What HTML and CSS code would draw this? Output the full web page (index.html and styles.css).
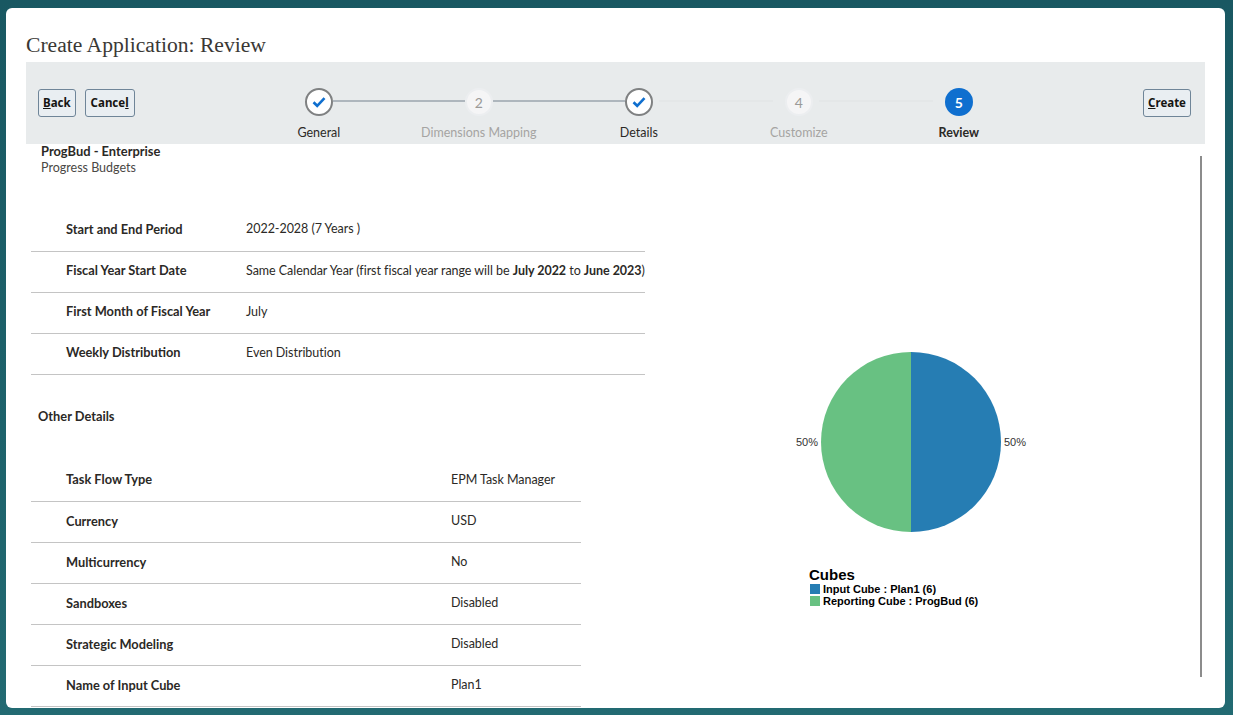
FILE: index.html
```html
<!DOCTYPE html>
<html lang="en">
<head>
    <meta charset="UTF-8">
    <title>Create Application: Review</title>
    <link rel="stylesheet" href="styles.css">
</head>
<body>
    <div class="dialog">
        <h1 class="dialog-title">Create Application: Review</h1>

        <div class="train-bar">
            <div class="train-actions">
                <button class="btn"><u>B</u>ack</button>
                <button class="btn btn-wide">Cance<u>l</u></button>
            </div>
            <ol class="train">
                <li class="step done line-dark">
                    <span class="step-icon">
                        <svg width="14" height="12" viewBox="0 0 14 12"><path d="M1.5 6.2 5.2 9.8 12.5 2.2" fill="none" stroke="#0f6fcf" stroke-width="2.6"/></svg>
                    </span>
                    <span class="step-label">General</span>
                </li>
                <li class="step todo line-dark">
                    <span class="step-icon">2</span>
                    <span class="step-label">Dimensions Mapping</span>
                </li>
                <li class="step done">
                    <span class="step-icon">
                        <svg width="14" height="12" viewBox="0 0 14 12"><path d="M1.5 6.2 5.2 9.8 12.5 2.2" fill="none" stroke="#0f6fcf" stroke-width="2.6"/></svg>
                    </span>
                    <span class="step-label">Details</span>
                </li>
                <li class="step todo">
                    <span class="step-icon">4</span>
                    <span class="step-label">Customize</span>
                </li>
                <li class="step current">
                    <span class="step-icon">5</span>
                    <span class="step-label">Review</span>
                </li>
            </ol>
            <div class="train-actions">
                <button class="btn"><u>C</u>reate</button>
            </div>
        </div>

        <div class="review">
            <div class="summary">
                <div class="app-name">ProgBud - Enterprise</div>
                <div class="app-desc">Progress Budgets</div>

                <table class="details details-main">
                    <tr><th>Start and End Period</th><td>2022-2028 (7 Years )</td></tr>
                    <tr><th>Fiscal Year Start Date</th><td>Same Calendar Year (first fiscal year range will be <b>July 2022</b> to <b>June 2023</b>)</td></tr>
                    <tr><th>First Month of Fiscal Year</th><td>July</td></tr>
                    <tr><th>Weekly Distribution</th><td>Even Distribution</td></tr>
                </table>

                <h2 class="section-title">Other Details</h2>

                <table class="details details-other">
                    <tr><th>Task Flow Type</th><td>EPM Task Manager</td></tr>
                    <tr><th>Currency</th><td>USD</td></tr>
                    <tr><th>Multicurrency</th><td>No</td></tr>
                    <tr><th>Sandboxes</th><td>Disabled</td></tr>
                    <tr><th>Strategic Modeling</th><td>Disabled</td></tr>
                    <tr><th>Name of Input Cube</th><td>Plan1</td></tr>
                </table>
            </div>

            <div class="chart">
                <svg class="pie" width="240" height="190" viewBox="0 0 240 190">
                    <path d="M120 5 A90 90 0 0 1 120 185 Z" fill="#267db3"/>
                    <path d="M120 5 A90 90 0 0 0 120 185 Z" fill="#68c182"/>
                    <text x="213" y="99" class="pie-label">50%</text>
                    <text x="5" y="99" class="pie-label">50%</text>
                </svg>
                <div class="legend">
                    <div class="legend-title">Cubes</div>
                    <div class="legend-item"><span class="swatch swatch-blue"></span>Input Cube : Plan1 (6)</div>
                    <div class="legend-item"><span class="swatch swatch-green"></span>Reporting Cube : ProgBud (6)</div>
                </div>
            </div>

            <div class="scroll-thumb"></div>
        </div>
    </div>
</body>
</html>
```

FILE: styles.css
```css
* {
    box-sizing: border-box;
    margin: 0;
    padding: 0;
}

html, body {
    height: 715px;
    overflow: hidden;
}

body {
    background: linear-gradient(180deg, #195862 0%, #1d626b 60%, #226a72 100%);
    padding: 8px 8px 7px 6px;
    font-family: Lato, "Noto Sans", sans-serif;
    font-size: 13px;
    color: #2b2926;
}

.dialog {
    height: 700px;
    background-color: white;
    border-radius: 6px;
    padding: 0 20px;
    overflow: hidden;
}

.dialog-title {
    height: 54px;
    padding-top: 24px;
    font-family: "Liberation Serif", serif;
    font-size: 21.6px;
    line-height: 26px;
    font-weight: normal;
    color: #3a3835;
}

/* train */
.train-bar {
    display: flex;
    height: 82px;
    padding: 27px 14px 0 12px;
    background-color: #e8ebec;
}

.train-actions {
    display: flex;
    gap: 9px;
}

.btn {
    height: 28px;
    padding: 0 4px 2px;
    font-family: "Noto Sans", sans-serif;
    font-size: 11.5px;
    font-weight: bold;
    color: #161513;
    background-color: #e9eef2;
    border: 1px solid #6f8598;
    border-radius: 3px;
}

.btn-wide {
    padding: 0 5px 2px;
}

.train {
    flex: 1;
    display: flex;
    justify-content: center;
    list-style-type: none;
    margin-top: -1px;
}

.step {
    position: relative;
    width: 160px;
    display: flex;
    flex-direction: column;
    align-items: center;
}

/* connector to the next step */
.step::after {
    content: "";
    position: absolute;
    top: 12px;
    left: 100px;
    width: 114px;
    height: 2px;
    background-color: #e4e7e8;
}

.step:last-child::after {
    display: none;
}

.line-dark::after {
    left: 94px;
    width: 132px;
    background-color: #aeb6bd;
}

.step-icon {
    width: 28px;
    height: 28px;
    border-radius: 50%;
    display: flex;
    align-items: center;
    justify-content: center;
    font-size: 14px;
}

.done .step-icon {
    background-color: white;
    border: 2px solid #7f8182;
}

.todo .step-icon {
    background-color: #f5f5f6;
    border: 2px solid #eceef0;
    color: #9b9a98;
}

.current .step-icon {
    background-color: #0f6fcf;
    color: white;
    font-weight: bold;
}

.step-label {
    margin-top: 9px;
    font-size: 12.5px;
    line-height: 16px;
    white-space: nowrap;
}

.todo .step-label {
    color: #a5a4a2;
}

.current .step-label {
    font-weight: bold;
}

/* review body */
.review {
    position: relative;
    display: flex;
    height: 564px;
}

.summary {
    width: 640px;
    flex-shrink: 0;
}

.app-name {
    padding: 0 0 0 15px;
    font-size: 12.9px;
    font-weight: bold;
    line-height: 15px;
}

.app-desc {
    padding-left: 15px;
    font-size: 12.5px;
    line-height: 17px;
    color: #4a4845;
}

.details {
    margin-left: 5px;
    border-collapse: collapse;
    table-layout: fixed;
    white-space: nowrap;
}

.details th, .details td {
    height: 41px;
    padding-bottom: 3px;
    border-bottom: 1px solid #c4c4c4;
    text-align: left;
    vertical-align: middle;
}

.details th {
    padding-left: 35px;
    font-size: 12.8px;
    font-weight: bold;
}

.details td {
    font-size: 12.5px;
    letter-spacing: -0.04px;
}

.details-main {
    width: 614px;
    margin-top: 34px;
}

.details-main th {
    width: 215px;
}

.details-other {
    width: 550px;
    margin-top: 36px;
}

.details-other th {
    width: 420px;
}

.section-title {
    margin: 33px 0 0 12px;
    font-size: 12.8px;
    line-height: 17px;
    font-weight: bold;
}

.chart {
    position: relative;
    flex: 1;
}

.pie {
    display: block;
    margin: 203px 0 0 125px;
}

.pie-label {
    font-family: "Liberation Sans", sans-serif;
    font-size: 11px;
    fill: #333;
}

.legend {
    margin: 29px 0 0 143px;
    font-family: "Liberation Sans", sans-serif;
    color: black;
}

.legend-title {
    font-size: 15px;
    line-height: 17px;
    font-weight: bold;
}

.legend-item {
    display: flex;
    align-items: center;
    gap: 3px;
    font-size: 11px;
    line-height: 12px;
    font-weight: bold;
    margin-left: 1px;
}

.swatch {
    width: 10px;
    height: 10px;
}

.swatch-blue {
    background-color: #267db3;
}

.swatch-green {
    background-color: #68c182;
}

.scroll-thumb {
    position: absolute;
    top: 12px;
    right: 3px;
    width: 2px;
    height: 521px;
    background-color: #8c8c8c;
}
```
